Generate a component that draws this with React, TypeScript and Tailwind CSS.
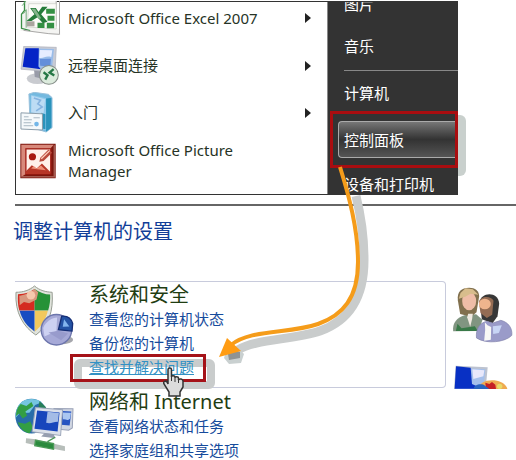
import type { ReactNode } from "react";

function ExcelIcon() {
  return (
    <svg viewBox="26 6 122 105" className="h-[35px] w-[41px]" aria-hidden="true">
      <path d="M42 6h94v82l10 2v18l-34-3-85-10z" fill="#f4f4f2" />
      <path d="M39 6v28l-9 12v42l26 7" fill="none" stroke="#3c8f47" strokeWidth="4" />
      <path d="M32 20l13-16M36 44l8-12v54" fill="none" stroke="#70aa78" strokeWidth="3" />
      <path d="M134 6v76M144 6v100l-32-2-76-10" fill="none" stroke="#aaa9a8" strokeWidth="3" />
      <path d="M52 14h82v76l-87-6z" fill="#fbfbf8" stroke="#c8ccc4" strokeWidth="2" />
      <path d="M104 29h26v15h-26zM108 50h21v15h-21zM106 71h22v17h-22zM78 71h21v16H78z" fill="#349043" />
      <path d="M46 67h23v15H46z" fill="#aaa59f" />
      <path d="M56 27h17l8 12 11-16h16L89 46l19 22-14 5-16-18-18 11H45l24-20z" fill="#247b39" />
      <path d="M60 29h11l18 29-8 2z" fill="#83b38a" />
    </svg>
  );
}

function RemoteIcon() {
  return (
    <svg viewBox="32 142 116 116" className="size-[39px]" aria-hidden="true">
      <ellipse cx="84" cy="239" rx="32" ry="16" fill="#c9cbd0" />
      <path d="M73 207l30 3v30l-27-6z" fill="#989ba8" />
      <path d="M43 143l97 3-4 74-101-9z" fill="#c8cbd5" stroke="#adb0bb" strokeWidth="2" />
      <path d="M49 149l84 2-6 60-86-6z" fill="#99bce9" />
      <path d="M48 149h40l-1 54 7 8-54-7z" fill="#0424c6" />
      <path d="M91 154l37 1-3 20c-18-5-22 5-36 2z" fill="#e6edff" />
      <path d="M91 181l33-1-2 23-30-2z" fill="#638fda" />
      <circle cx="118" cy="228" r="28" fill="#dcebdd" stroke="#858e88" strokeWidth="3" />
      <path d="M102 220l12 9-7 13M132 211l-12 10 14 9" fill="none" stroke="#267846" strokeWidth="7" />
    </svg>
  );
}

function StartIcon() {
  return (
    <svg viewBox="26 280 98 124" className="h-[41px] w-[33px]" aria-hidden="true">
      <path d="M52 286l16-5 43 6 11 10v91l-18 13-48-15z" fill="#74b9df" stroke="#9ac1dc" strokeWidth="3" />
      <path d="M58 288l46 11v97l-47-15z" fill="#91caec" />
      <path d="M60 291l41 11-5 47-37-8z" fill="#bddcf4" />
      <path d="M67 298l20 7-8 11 13 9-18 12" fill="none" stroke="#86b3e0" strokeWidth="5" />
      <path d="M104 300l16-2v89l-16 13zM89 343l13 4v46l-13-3z" fill="#2a93bb" />
      <path d="M28 343l65 3v49l-65-3z" fill="#f5f9fb" stroke="#8b9ca9" strokeWidth="3" />
      <path d="M37 355h14M37 364h24M36 373h23M36 382h29M66 358h19" stroke="#a7b6c1" strokeWidth="3" />
      <circle cx="75" cy="377" r="7" fill="#73b6e8" />
    </svg>
  );
}

function PictureIcon() {
  return (
    <svg viewBox="32 430 110 108" className="size-9" aria-hidden="true">
      <path d="M33 431h108v106H33z" fill="#7c160d" />
      <path d="M36 434h99l-10 12H50v78l-14 8z" fill="#d8897b" />
      <path d="M50 447h76v76H50z" fill="#fff0e9" stroke="#a52017" strokeWidth="4" />
      <path d="M50 515l18-18 15 10 16-15 25 25v7H50z" fill="#b73627" />
      <path d="M66 507l8-8 8 9 14-10 15 14z" fill="#ee9179" />
      <circle cx="70" cy="471" r="11" fill="#a8180f" />
      <path d="M91 486l3-12 25-25 11 10-26 25z" fill="#ba4b3d" />
      <path d="M97 477l25-24" stroke="#ffd1bf" strokeWidth="4" />
      <path d="M36 532h101V436" fill="none" stroke="#a65b50" strokeWidth="5" />
    </svg>
  );
}

function ShieldIcon() {
  return (
    <svg viewBox="14 12 176 184" className="h-[61px] w-[59px]" aria-hidden="true">
      <path d="M72 15c16 14 34 18 53 19 4 56-9 99-49 129C39 139 12 96 16 34c22 0 40-6 56-19z" fill="#e0e3dc" stroke="#969c92" strokeWidth="3" />
      <path d="M72 24v65H26c-5-18-5-33-4-49 22-1 37-7 50-16z" fill="#d42b20" />
      <path d="M72 24c15 11 31 16 47 17 1 16-1 33-6 48H72z" fill="#269237" />
      <path d="M27 90h45v62C49 137 34 116 27 90z" fill="#174cc1" />
      <path d="M73 90h39c-6 25-18 46-39 62z" fill="#f2c85d" />
      <path d="M26 44c17 1 35-13 47-19l10 9-5 22-22 11-16-4-13 10z" fill="#d8977e" />
      <circle cx="61" cy="43" r="13" fill="#f4c8ad" />
      <ellipse cx="151" cy="177" rx="37" ry="14" fill="#a5a6ac" />
      <circle cx="138" cy="147" r="46" fill="#a6a9d7" stroke="#6c75ac" strokeWidth="4" />
      <path d="M98 142c8-22 28-31 42-32l-2 41-36 16z" fill="#cdd1f2" />
      <path d="M144 147l10-41c20-2 29 8 33 22l-2 23z" fill="#2453a5" stroke="#162f76" strokeWidth="4" />
      <path d="M157 138l4-23 16 22z" fill="#83b5ee" />
      <path d="M114 155l31-5 28 8-21 21z" fill="#989bcc" />
    </svg>
  );
}

function NetworkIcon() {
  return (
    <svg viewBox="14 358 176 164" className="h-[55px] w-[59px]" aria-hidden="true">
      <ellipse cx="63" cy="412" rx="48" ry="52" fill="#286ca9" />
      <path d="M29 374c15-15 46-18 65-3l-20 8-17 23-28 1-13 14c0-18 4-33 13-43z" fill="#75c5df" />
      <path d="M31 376l17 6 15-12 6 12-24 16 5 13-13 8-11-15-9 8c1-18 5-27 14-36zM22 430l22 5 15-8 9 19-11 17c-18-4-29-17-35-33z" fill="#339e44" />
      <path d="M87 367l19 18 6 27-16-8-12-17z" fill="#267f58" />
      <path d="M130 389l57 1-2 57-11 7-42-4z" fill="#d0d6e2" stroke="#9ba3b8" strokeWidth="3" />
      <path d="M141 396l41 2-5 42-34-3z" fill="#2754c1" />
      <path d="M157 401l24 1-3 18c-8 8-14 0-21 2z" fill="#abc7f1" />
      <path d="M75 386l81 7-6 77-85-11z" fill="#dce1ea" stroke="#9da7bb" strokeWidth="3" />
      <path d="M80 395l67 6-6 57-69-8z" fill="#1746bc" />
      <path d="M111 399l34 4-3 26c-16 0-20 7-35 3z" fill="#a4bce6" />
      <path d="M103 462l26 4 6 12-43-5z" fill="#969eaf" />
      <path d="M47 478l29 3 26 7 61 14v14l-61-11-56-13z" fill="#b7beba" />
      <path d="M75 484l54 10v17l-56-11zM111 488l23-13" fill="#2a8a3d" stroke="#4b9a56" strokeWidth="4" />
    </svg>
  );
}

function UsersIcon() {
  return (
    <svg viewBox="94 50 182 168" className="h-14 w-[61px]" aria-hidden="true">
      <path d="M97 183c-3-25 12-42 34-48l35-3 19 16-11 34z" fill="#819581" />
      <path d="M110 160l12 14 40-6 9 14h-66z" fill="#397948" />
      <path d="M111 90c-3-27 11-37 34-38 18 0 30 10 30 26l-8 48-16 13-33-8z" fill="#81704e" />
      <ellipse cx="145" cy="92" rx="21" ry="28" fill="#efbda7" />
      <path d="M119 68l15-14 22 3 17 16-24-3-16 9-19 6z" fill="#d8bd8c" />
      <path d="M142 130h14l-2 15-6 24-9-28z" fill="#efe9e0" />
      <path d="M177 96c0-30 56-36 58 4l-5 38-15 21-32-12z" fill="#373737" />
      <path d="M174 95c4-18 36-20 44-4l-4 42-16 10-19-15z" fill="#946c54" />
      <ellipse cx="192" cy="101" rx="18" ry="16" fill="#efb48d" />
      <path d="M167 203c-3-25 9-46 31-50l18 5 24-8c23 6 35 23 33 45-18 20-76 28-106 8z" fill="#9a9bc9" stroke="#8282aa" strokeWidth="2" />
      <path d="M192 156l8 9 11 5-1 38-20 3 3-32z" fill="#f8f8f5" />
      <path d="M216 168l27-3-9 23-17 3z" fill="#c8d5f5" />
    </svg>
  );
}

function AppearanceIcon() {
  return (
    <svg viewBox="102 285 162 72" className="h-6 w-[54px]" aria-hidden="true">
      <path d="M107 287l96 5-6 65h-95z" fill="#bdc3d0" />
      <path d="M112 293l84 5-6 58h-85z" fill="#a4bfeb" />
      <path d="M108 289l44 4 4 49 31 14h-83z" fill="#0830c4" />
      <path d="M157 298l36 3-3 18-30 8z" fill="#e8e8fb" />
      <path d="M174 357c4-22 30-30 57-25 15 3 29 13 31 25z" fill="#efaa50" />
      <path d="M196 338l12 4 8-6 10 8 2 13h-30z" fill="#c51f24" />
      <circle cx="239" cy="349" r="8" fill="#e8da69" />
      <path d="M161 357c0-10 15-17 30-13l17 13z" fill="#2864c0" />
    </svg>
  );
}

function HandCursor() {
  return (
    <svg viewBox="0 0 42 60" className="pointer-events-none absolute top-3 left-[74px] z-20 h-[30px] w-[21px]" aria-hidden="true">
      <path
        d="M10 5c0-4 7-4 7 0v15c0-4 7-3 7 0v2c0-4 7-3 7 0v4c2-4 9-2 9 2v12l-6 10v8H12v-8L2 34c-2-4 2-8 6-4l2 4z"
        fill="#dcdcdc"
        stroke="#333"
        strokeWidth="3"
      />
      <path d="M17 20v8M24 22v8M31 24v8" stroke="#333" strokeWidth="2" />
    </svg>
  );
}

function GuideArrow() {
  return (
    <svg viewBox="215 160 160 210" className="pointer-events-none absolute top-40 left-[215px] z-20 h-[210px] w-40" fill="none" aria-hidden="true">
      <path d="M356 196C361 216 364 235 364 260C364 298 348 321 320 331C294 340 254 339 238 350L232 356" stroke="#c9cccc" strokeWidth="9" />
      <path d="M227 348l12 1 5 5-3 9-12 1-5-6z" fill="#c9d0d0" />
      <path d="M231 350l9 2v6l-11 2-1-6z" fill="#8e9393" />
      <path d="M340 167C349 196 358 229 358 262C358 298 343 315 318 324C289 334 250 329 231 345" stroke="#f59c1a" strokeWidth="4" />
      <path d="M219 357l8-19 14 13z" fill="#ff9c13" />
    </svg>
  );
}

const programs = [
  { label: "Microsoft Office Excel 2007", icon: <ExcelIcon />, arrow: true, row: "mb-2 h-8" },
  { label: "远程桌面连接", icon: <RemoteIcon />, arrow: true, row: "h-[47px]" },
  { label: "入门", icon: <StartIcon />, arrow: true, row: "h-[47px]" },
  { label: "Microsoft Office Picture Manager", icon: <PictureIcon />, arrow: false, row: "mt-[3px] mb-[11px] h-[43px]" },
];

function StartMenu() {
  return (
    <nav className="relative mt-px mr-[58px] ml-[15px] flex border-y border-[#333]">
      <div className="absolute top-[113px] -right-2 h-[61px] w-4 rounded-md bg-[#c9d0cd]" />
      <div className="min-w-0 flex-1 border-l border-[#333] bg-white">
        {programs.map((item) => (
          <button key={item.label} className={`flex w-full items-center pr-4 pl-1 text-left ${item.row}`}>
            <span className="w-12 shrink-0">{item.icon}</span>
            <span className="max-w-[200px] flex-1 text-[15px] leading-[21px] text-[#263326]">{item.label}</span>
            {item.arrow && (
              <svg viewBox="0 0 6 10" className="ml-auto h-2.5 w-1.5" aria-hidden="true">
                <path d="M0 0l6 5-6 5z" fill="#222" />
              </svg>
            )}
          </button>
        ))}
      </div>
      <div className="relative h-48 w-[131px] shrink-0 overflow-hidden border-l border-[#888] bg-[#333] text-[15px] leading-5 text-white">
        <button className="-mt-2.5 block h-6 w-full pl-4 text-left">图片</button>
        <button className="mt-[17px] block h-[26px] w-full pl-4 text-left">音乐</button>
        <hr className="mt-[11px] ml-4 border-[#888]" />
        <button className="mt-1.5 block h-8 w-full pl-4 text-left">计算机</button>
        <div className="mt-0.5 ml-0.5 border-[3px] border-[#a90d10] py-[7px] pl-[5px]">
          <button className="block h-[37px] w-full rounded-l border border-r-0 border-[#aaa] bg-linear-to-b from-[#777] via-[#333] via-50% to-[#555] pl-[5px] text-left">
            控制面板
          </button>
        </div>
        <button className="mt-1.5 block h-5 w-full pl-4 text-left">设备和打印机</button>
      </div>
    </nav>
  );
}

type CategoryProps = {
  title: string;
  icon: ReactNode;
  links: string[];
  highlighted?: string;
};

function Category({ title, icon, links, highlighted }: CategoryProps) {
  return (
    <section className="flex">
      <div className="w-[74px] shrink-0 pt-[3px]">{icon}</div>
      <div>
        <h2 className="h-[25px] text-xl leading-[25px] text-[#1f3d12]">{title}</h2>
        <ul className="text-[15px] leading-6 text-[#164b9c]">
          {links.map((link) =>
            link === highlighted ? (
              <li key={link} className="relative">
                <div className="absolute top-1 -left-[15px] h-[30px] w-[141px] rounded-md border-8 border-[#c9cccc]" />
                <div className="absolute -top-px -left-[19px] h-7 w-[136px] border-[3px] border-[#a51218]" />
                <a href="#" className="relative text-[#3291c4] underline">{link}</a>
                <HandCursor />
              </li>
            ) : (
              <li key={link}>
                <a href="#">{link}</a>
              </li>
            ),
          )}
        </ul>
      </div>
    </section>
  );
}

export default function App() {
  return (
    <main className="relative overflow-hidden bg-white font-['Noto_Sans','Noto_Sans_CJK_SC',sans-serif]">
      <StartMenu />
      <div className="mt-[9px] ml-[15px] border-t-2 border-[#666]" />
      <div className="ml-[15px] pt-3 pb-[35px]">
        <h1 className="-ml-0.5 text-xl leading-7 text-[#123e98]">调整计算机的设置</h1>
      </div>
      <div className="flex pl-[15px]">
        <div className="min-w-0 flex-1">
          <div className="rounded-r-sm border-y border-r border-[#c8cbdc] pb-2">
            <Category
              title="系统和安全"
              icon={<ShieldIcon />}
              links={["查看您的计算机状态", "备份您的计算机", "查找并解决问题"]}
              highlighted="查找并解决问题"
            />
          </div>
          <div className="pt-px">
            <Category
              title="网络和 Internet"
              icon={<div className="pt-1.5"><NetworkIcon /></div>}
              links={["查看网络状态和任务", "选择家庭组和共享选项"]}
            />
          </div>
        </div>
        <div className="w-[70px] shrink-0 pt-1.5 pl-1.5">
          <UsersIcon />
          <div className="mt-[22px] pl-0.5">
            <AppearanceIcon />
          </div>
        </div>
      </div>
      <GuideArrow />
    </main>
  );
}
